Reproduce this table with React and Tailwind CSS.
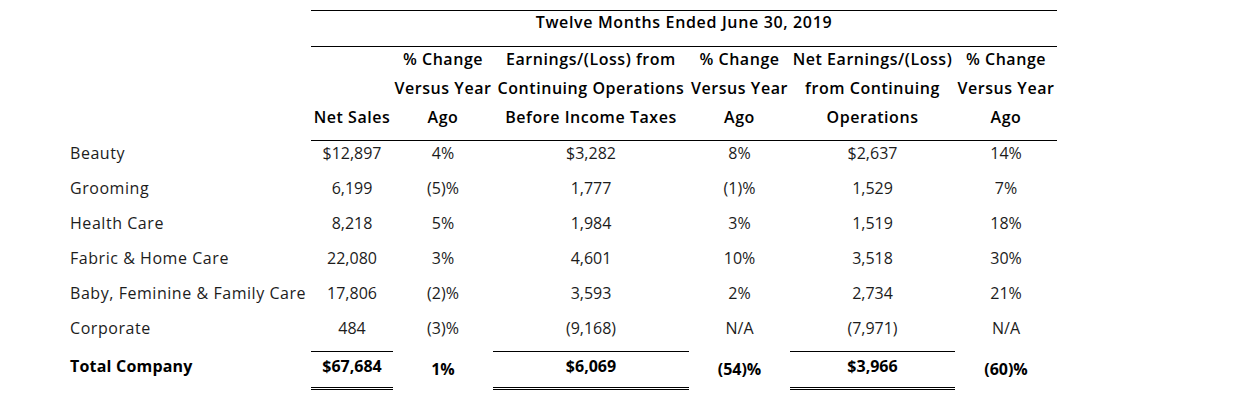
const rows = [
  ["Beauty", "$12,897", "4%", "$3,282", "8%", "$2,637", "14%"],
  ["Grooming", "6,199", "(5)%", "1,777", "(1)%", "1,529", "7%"],
  ["Health Care", "8,218", "5%", "1,984", "3%", "1,519", "18%"],
  ["Fabric & Home Care", "22,080", "3%", "4,601", "10%", "3,518", "30%"],
  ["Baby, Feminine & Family Care", "17,806", "(2)%", "3,593", "2%", "2,734", "21%"],
  ["Corporate", "484", "(3)%", "(9,168)", "N/A", "(7,971)", "N/A"],
];

const headers = [
  ["Net Sales"],
  ["% Change", "Versus Year", "Ago"],
  ["Earnings/(Loss) from", "Continuing Operations", "Before Income Taxes"],
  ["% Change", "Versus Year", "Ago"],
  ["Net Earnings/(Loss)", "from Continuing", "Operations"],
  ["% Change", "Versus Year", "Ago"],
];

const totals = ["$67,684", "1%", "$6,069", "(54)%", "$3,966", "(60)%"];

const App = () => {
  return (
    <div className="min-h-screen w-full bg-white pt-[10px] pl-[70px] text-[16px] text-[#1c1c1c] font-['Open_Sans',sans-serif]">
      <div className="grid grid-cols-[241px_82px_100px_196px_101px_165px_102px]">
        {/* title */}
        <div />
        <div className="col-span-6 h-[37px] border-y border-black text-center leading-[22px] font-semibold tracking-[0.65px] text-black">
          Twelve Months Ended June 30, 2019
        </div>

        {/* column headers */}
        <div />
        {headers.map((lines, i) => (
          <div
            key={i}
            className="h-[94px] border-b border-black flex flex-col justify-end items-center pb-[8px] leading-[29px] font-semibold tracking-[0.55px] text-black whitespace-nowrap"
          >
            {lines.map((l) => (
              <span key={l}>{l}</span>
            ))}
          </div>
        ))}

        {/* data */}
        {rows.map((r) =>
          r.map((cell, j) => (
            <div
              key={r[0] + j}
              className={
                "h-[35px] leading-[24px] whitespace-nowrap " +
                (j === 0 ? "text-left tracking-[0.55px]" : "text-center")
              }
            >
              {cell}
            </div>
          ))
        )}

        {/* totals */}
        <div className="h-[36px] leading-[30px] font-bold tracking-[0.2px] text-black">Total Company</div>
        {totals.map((t, i) => {
          const ruled = i % 2 === 0;
          return (
            <div key={i} className="flex flex-col">
              <div
                className={
                  "h-[36px] text-center font-bold text-black " +
                  (ruled ? "border-t border-black leading-[28px]" : "leading-[34px] pt-px")
                }
              >
                {t}
              </div>
              {ruled ? <div className="h-[3px] border-y border-black" /> : null}
            </div>
          );
        })}
      </div>
    </div>
  );
};

export default App;
